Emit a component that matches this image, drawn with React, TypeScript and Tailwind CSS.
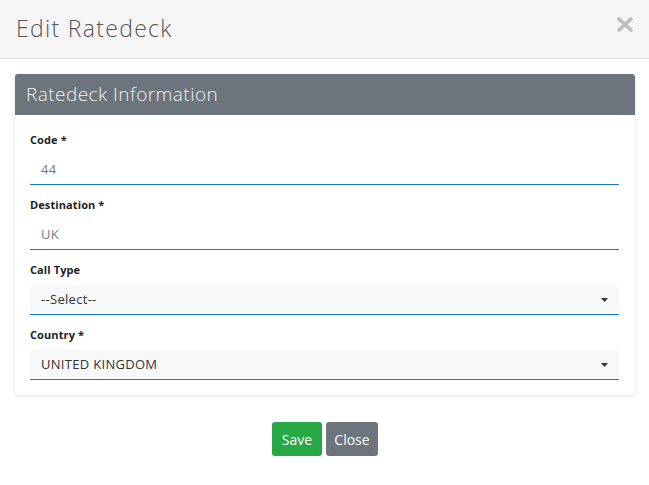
import React from "react";

const font = { fontFamily: '"Open Sans", "Noto Sans", Arial, sans-serif' };

function Field({ label, value, select, muted }: { label: string; value: string; select?: boolean; muted?: boolean }) {
  return (
    <div className="mb-[10px] last:mb-0">
      <div className="h-[18px] leading-[20px] text-[11px] font-bold text-[#222] mb-[7px] tracking-[0.1px]">{label}</div>
      <div
        className={`h-[30px] flex items-center justify-between pl-[11px] pr-[11px] border-b border-[#1976d2] text-[13px] tracking-[0.3px] ${
          select ? "bg-[#f7f8fa] text-[#333]" : "bg-white"
        } ${muted ? "text-[#7a7a7a]" : ""}`}
      >
        <span>{value}</span>
        {select && (
          <svg width="7" height="4" viewBox="0 0 7 4">
            <path d="M0 0 H7 L3.5 4 Z" fill="#333" />
          </svg>
        )}
      </div>
    </div>
  );
}

export default function App() {
  return (
    <div className="w-[649px] h-[485px] bg-white" style={font}>
      <div className="h-[59px] bg-[#f5f5f5] border-b border-[#dddddd] flex items-start justify-between pl-[16px] pr-[16px]">
        <div className="text-[23px] font-light text-[#555] mt-[13px] leading-[30px] tracking-[1.3px]">Edit Ratedeck</div>
        <svg width="16" height="15" viewBox="0 0 16 15" className="mt-[17px]">
          <path d="M2 2 L14 13 M14 2 L2 13" stroke="#bdbdbd" strokeWidth="3.6" strokeLinecap="round" />
        </svg>
      </div>
      <div className="p-[15px] pr-[14px]">
        <div className="rounded-[3px] bg-white shadow-[0_1px_4px_rgba(0,0,0,0.12)] overflow-hidden">
          <div className="h-[41px] bg-[#6c757d] flex items-center pl-[11px] text-[19px] font-light text-[#f2f2f2] tracking-[0.45px]">
            Ratedeck Information
          </div>
          <div className="pt-[15px] pb-[15px] px-[15px] pr-[16px]">
            <Field label="Code *" value="44" muted />
            <Field label="Destination *" value="UK" muted />
            <Field label="Call Type" value="--Select--" select />
            <Field label="Country *" value="UNITED KINGDOM" select />
          </div>
        </div>
        <div className="flex justify-center gap-[4px] mt-[27px]">
          <button className="h-[34px] w-[50px] rounded-[3px] bg-[#28a745] text-white text-[14px]">Save</button>
          <button className="h-[34px] w-[52px] rounded-[3px] bg-[#6c757d] text-white text-[14px]">Close</button>
        </div>
      </div>
    </div>
  );
}
